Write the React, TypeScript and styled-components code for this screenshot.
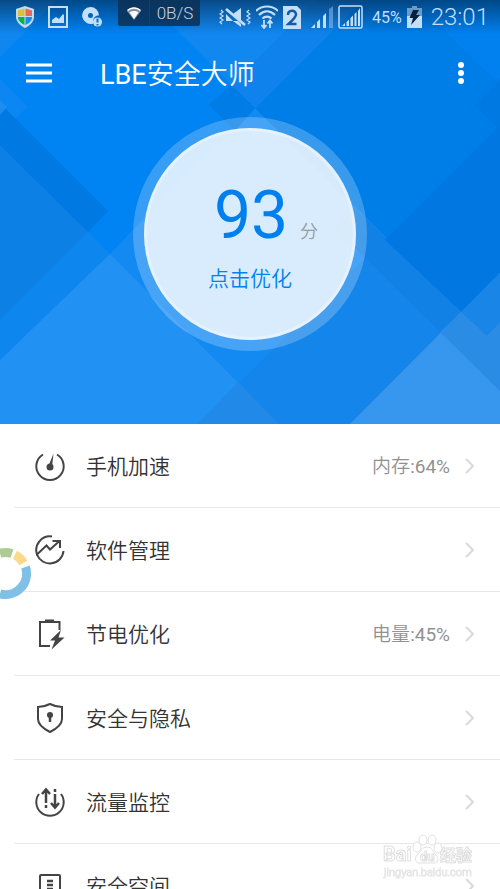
import React from "react";
import styled, { createGlobalStyle } from "styled-components";

const GlobalStyle = createGlobalStyle`
  * { box-sizing: border-box; }
  body {
    margin: 0;
    background: #fff;
    font-family: Roboto, "Noto Sans CJK SC", sans-serif;
    font-weight: 350;
  }
  button { font: inherit; border: 0; padding: 0; background: none; cursor: pointer; }
  svg { display: block; flex: none; }
`;

const Screen = styled.div`
  position: relative;
  display: flex;
  flex-direction: column;
  height: 100vh;
  overflow: hidden;
  background: #fff;
`;

const Hero = styled.header`
  position: relative;
  flex: none;
  display: flex;
  flex-direction: column;
  background: #0083f3;
  isolation: isolate;
`;

const Backdrop = styled.svg`
  position: absolute;
  inset: 0;
  width: 100%;
  height: 100%;
  z-index: -1;
`;

const StatusBar = styled.div`
  display: flex;
  justify-content: space-between;
  height: 34px;
  background: linear-gradient(rgba(0, 25, 50, 0.55), rgba(0, 40, 80, 0));
  color: #c4dffa;
`;

const StatusGroup = styled.div<{ $gap: number }>`
  display: flex;
  align-items: center;
  gap: ${(p) => p.$gap}px;
`;

const Notifications = styled(StatusGroup)`
  padding-left: 16px;
`;

const System = styled(StatusGroup)`
  padding-right: 11px;
`;

const SpeedBadge = styled.div`
  display: flex;
  align-self: flex-start;
  align-items: center;
  height: 26px;
  width: 82px;
  margin-left: 2px;
  border-radius: 0 0 2px 2px;
  background: rgba(12, 48, 86, 0.85);
  color: #c9d2da;
  font-size: 17px;
  font-weight: 300;
`;

const SpeedIcon = styled.span`
  display: flex;
  align-items: center;
  justify-content: center;
  width: 32px;
  height: 26px;
  border-right: 1px solid #173f69;
`;

const SpeedText = styled.span`
  flex: 1;
  text-align: center;
`;

const Battery = styled.span`
  font-size: 16px;
  font-weight: 400;
  margin-left: 4px;
`;

const Clock = styled.time`
  font-size: 24px;
  font-weight: 300;
  line-height: 34px;
  margin-left: 4px;
`;

const Toolbar = styled.div`
  display: flex;
  align-items: center;
  height: 78px;
  padding: 0 25px 0 26px;
`;

const IconButton = styled.button`
  display: flex;
  align-items: center;
  justify-content: center;
  height: 40px;
`;

const Latin = styled.span`
  font-weight: 400;
`;

const Title = styled.h1`
  flex: 1;
  margin: 0 0 0 48px;
  padding-top: 4px;
  color: #fff;
  font-size: 27px;
  line-height: 36px;
  font-weight: 350;
`;

const ScoreButton = styled.button`
  display: flex;
  flex-direction: column;
  align-items: center;
  align-self: center;
  width: 234px;
  height: 234px;
  margin: 5px 0 73px;
  padding-top: 56px;
  border: 11px solid rgba(255, 255, 255, 0.22);
  border-radius: 50%;
  background: rgba(255, 255, 255, 0.84);
  background-clip: padding-box;
  box-shadow: inset 0 0 1px 3px rgba(255, 255, 255, 0.35);
  color: #0080ee;
`;

const Points = styled.span`
  display: flex;
  align-items: baseline;
  gap: 12px;
  padding-left: 32px;
  font-size: 66px;
  font-weight: 400;
  line-height: 64px;
`;

const Unit = styled.span`
  color: #979da3;
  font-size: 18px;
  font-weight: 350;
`;

const Hint = styled.span`
  font-size: 21px;
  line-height: 30px;
`;

const Menu = styled.ul`
  flex: 1;
  min-height: 0;
  margin: 0;
  padding: 0;
  list-style: none;
  overflow-y: auto;
  scrollbar-width: none;
`;

const MenuItem = styled.li`
  margin-left: 14px;
  border-bottom: 1px solid #e8e8e8;
`;

const MenuButton = styled.button`
  display: flex;
  align-items: center;
  width: 100%;
  height: 83px;
  padding: 0 25px 0 20px;
  text-align: left;
`;

const Label = styled.span`
  flex: 1;
  margin-left: 20px;
  padding-top: 2px;
  color: #333;
  font-size: 21px;
  line-height: 30px;
`;

const Value = styled.span`
  margin-right: 14px;
  padding-top: 2px;
  color: #919191;
  font-size: 19px;
  line-height: 28px;
`;

const FloatingRing = styled.svg`
  position: fixed;
  left: 0;
  top: 547px;
`;

const Watermark = styled.svg`
  position: fixed;
  right: 25px;
  bottom: 8px;
  pointer-events: none;
`;

const Pattern = () => (
  <Backdrop viewBox="0 0 500 424" preserveAspectRatio="none" aria-hidden="true">
    <path d="M0 0H57L0 57z" fill="#0f87ef" />
    <path d="M0 79 28 107 0 132z" fill="#0b86f2" />
    <path d="M255 108 363 0H500V320L487 336z" fill="#007ee8" />
    <path d="M147 0 255 108 363 0z" fill="#1187f0" />
    <path d="M316 0 231 85 255 108 363 0z" fill="#0f83eb" />
    <path d="M413 0 500 85V0z" fill="#0081ef" />
    <path d="M209 105 230 86 275 131 235 131z" fill="#007ce6" />
    <path d="M255 108 0 360V424H500V350z" fill="#1389f2" />
    <path d="M147 108 255 108 147 215 110 254 88 232z" fill="#0083f3" />
    <path d="M209 105 231 85 255 108 235 131z" fill="#007ce6" />
    <path d="M0 320 88 232 110 254 0 360z" fill="#0d86ee" />
    <path d="M0 145 88 232 0 320z" fill="#0c80e5" />
    <path d="M0 103 108 211 88 232 0 145z" fill="#0079e3" />
    <path d="M0 100 7 107 0 115z" fill="#1c8cf0" />
    <path d="M110 254 279 424H0V360z" fill="#2291f4" />
    <path d="M198 424 365 258 500 391V424z" fill="#1485ea" />
    <path d="M198 424 238 382 279 424z" fill="#218ae9" />
    <path d="M355 208 487 336 500 349V391L365 258 335 228z" fill="#1181e6" />
    <path d="M255 108 487 336 500 323V125L480 90z" fill="#007ee8" />
    <path d="M500 79 474 105 497 128 500 125z" fill="#007ae3" />
    <path d="M500 125 385 240 487 336 500 323z" fill="#0077e1" />
    <path d="M350 424 500 273V424z" fill="#3796ee" />
    <path d="M440 332 461 312 487 336 500 323V391z" fill="#2b8ce6" />
    <path d="M461 312 500 273V323L487 336z" fill="#1985e6" />
  </Backdrop>
);

const ShieldStatus = () => (
  <svg width="18" height="22" viewBox="0 0 18 22">
    <path d="M9 0 18 3V11C18 16 13 20 9 22 5 20 0 16 0 11V3z" fill="#c5dcf0" />
    <path d="M8.500 2.500V10H2V4.500z" fill="#d9c32e" />
    <path d="M9.500 2.500V10H16V4.500z" fill="#e5685c" />
    <path d="M2 11H8.500V19C5 17 2 15 2 11z" fill="#10b044" />
    <path d="M16 11H9.500V19C13 17 16 15 16 11z" fill="#168bf0" />
  </svg>
);

const ImageStatus = () => (
  <svg width="20" height="22" viewBox="0 0 20 22">
    <path d="M1 1H19V21H1z" fill="none" stroke="currentColor" strokeWidth="2" />
    <path d="M4 17V14L8 11 11 13 15 8 16 9V17z" fill="currentColor" />
  </svg>
);

const DiscStatus = () => (
  <svg width="20" height="22" viewBox="0 0 20 22">
    <path fillRule="evenodd" d="M8.500 1A8.500 8.500 0 0 1 17 9.500C13 9 10 13 11.500 17.500A8.500 8.500 0 1 1 8.500 1zM8.500 7A2.500 2.500 0 1 0 8.500 12 2.500 2.500 0 0 0 8.500 7z" fill="currentColor" />
    <circle cx="15.500" cy="16" r="4.500" fill="currentColor" />
    <path d="M15.500 12.500V16.500M15.500 18V19.500" stroke="#0c6fc8" strokeWidth="2" />
  </svg>
);

const SpeedWifi = () => (
  <svg width="14" height="13" viewBox="0 0 14 13">
    <path d="M0 4C4 -1 10 -1 14 4L7 13z" fill="#8595a5" />
    <path d="M.5 3.500C4 0 10 0 13.500 3.500" fill="none" stroke="#fff" strokeWidth="1.500" />
    <path d="M2.500 5.500C5 3.500 9 3.500 11.500 5.500L7 12z" fill="#fff" />
  </svg>
);

const MuteVibrate = () => (
  <svg width="32" height="22" viewBox="0 0 32 22" fill="none" stroke="currentColor">
    <path d="M2 4 4 6 1 8 4 10 1 12 4 14 1 16 3 18M30 4 28 6 31 8 28 10 31 12 28 14 31 16 29 18" strokeWidth="1.200" />
    <path d="M7 8 14 15H7zM14 8 22 2V15z" fill="currentColor" stroke="none" />
    <path d="M7 3 26 19" strokeWidth="2.500" />
    <path d="M14 15 22 21V18L19 15z" fill="currentColor" stroke="none" />
  </svg>
);

const WifiStatus = () => (
  <svg width="22" height="24" viewBox="0 0 22 24" fill="none" stroke="currentColor" strokeWidth="2.200">
    <path d="M0 6C6 0 16 0 22 6M3 10C8 5 14 5 19 10M6.500 13.500C9 11 13 11 15.500 13.500" />
    <path d="M8 15V23M5.500 20 8 23 10.500 20M14 23V15M11.500 18.500 14 15.500 16.500 18.500" strokeWidth="1.800" />
  </svg>
);

const SimIcon = styled.svg`
  margin-right: 5px;
`;

const SimStatus = () => (
  <SimIcon width="18" height="23" viewBox="0 0 18 23">
    <path d="M0 0H14L18 4V23H0z" fill="currentColor" />
    <path d="M5 9C5 3.500 13 3.500 13 8.500 13 11 11 13 5.500 18H13.500" fill="none" stroke="#155b9e" strokeWidth="2.500" />
  </SimIcon>
);

const SignalStatus = () => (
  <svg width="22" height="22" viewBox="0 0 22 22" fill="currentColor">
    <path d="M0 22 4 18V22zM6 16 9 13V22H6zM12 10 15 7V22H12z" />
    <path d="M18 3 22 0V22H18z" opacity=".4" />
  </svg>
);

const BoxedSignal = () => (
  <svg width="25" height="24" viewBox="0 0 25 24" fill="currentColor">
    <rect x="1" y="1" width="23" height="22" rx="1.500" fill="none" stroke="currentColor" strokeWidth="1.500" />
    <path d="M4 21 7 18V21zM8.500 17 11 14.500V21H8.500zM12.500 13 15 10.500V21H12.500zM16.500 9 18.500 7V21H16.500zM20 6 22 3V21H20z" />
  </svg>
);

const BatteryStatus = () => (
  <svg width="15" height="22" viewBox="0 0 15 22">
    <path d="M5 0H10V2H15V10H0V2H5z" fill="#6b9bc8" />
    <path d="M0 10H15V22H0z" fill="currentColor" />
    <path d="M6 4H12L9 9H13L4 19 6 12H2.500z" fill="#06213d" />
  </svg>
);

type IconKind = "boost" | "apps" | "power" | "privacy" | "traffic" | "space";

const drawings: Record<IconKind, React.ReactNode> = {
  boost: (
    <>
      <path d="M9 4.500A13.700 13.700 0 1 0 23 4.500" />
      <circle cx="16" cy="17" r="3.500" fill="currentColor" stroke="none" />
      <path d="M14.500 16 19.500 3.500 18 17z" fill="currentColor" stroke="none" />
    </>
  ),
  apps: (
    <>
      <path d="M18 2.500A13.700 13.700 0 0 0 3 20.500L12.500 11.500 16 15.500 25.500 7M18.500 7H26V14" />
      <path d="M3 20.500A13.700 13.700 0 0 0 29.500 17" />
    </>
  ),
  power: (
    <>
      <path d="M16 28H6V4H25.500V12" />
      <path d="M11 4V1.500H20V4z" fill="currentColor" stroke="none" />
      <path d="M27 12 16 22.500H21L17.500 31.500 30.500 19.500H24.500z" fill="currentColor" stroke="none" />
    </>
  ),
  privacy: (
    <>
      <path d="M16 2C12 4 8 5 4 5V17C4 23 10 27 16 30 22 27 28 23 28 17V5C24 5 20 4 16 2z" />
      <circle cx="16" cy="13" r="3" fill="currentColor" stroke="none" />
      <path d="M16 14V20" strokeWidth="2.500" />
    </>
  ),
  traffic: (
    <>
      <path d="M5 8A13.700 13.700 0 1 0 27 8" />
      <path d="M12 17V4M8 8 12 3.500 16 8M21 8V21M17 17 21 21.500 25 17" strokeWidth="2.500" />
      <path d="M12 19V22M21 3V6" strokeWidth="2.500" />
    </>
  ),
  space: (
    <>
      <rect x="6" y="5" width="20" height="25" rx="1" />
      <path d="M13 11H19M13 15H19M13 19H19" strokeWidth="2.500" />
    </>
  ),
};

const MenuIcon = ({ kind }: { kind: IconKind }) => (
  <svg width="32" height="32" viewBox="0 0 32 32" fill="none" stroke="currentColor" strokeWidth="2" color="#444">
    {drawings[kind]}
  </svg>
);

const Chevron = () => (
  <svg width="11" height="16" viewBox="0 0 11 16" fill="none" stroke="#d9d9d9" strokeWidth="2">
    <path d="M2 1 9 8 2 15" />
  </svg>
);

const items: { kind: IconKind; label: string; value?: [string, number] }[] = [
  { kind: "boost", label: "手机加速", value: ["内存", 64] },
  { kind: "apps", label: "软件管理" },
  { kind: "power", label: "节电优化", value: ["电量", 45] },
  { kind: "privacy", label: "安全与隐私" },
  { kind: "traffic", label: "流量监控" },
  { kind: "space", label: "安全空间" },
];

export default function App() {
  return (
    <Screen>
      <GlobalStyle />
      <Hero>
        <Pattern />
        <StatusBar>
          <Notifications $gap={14}>
            <ShieldStatus />
            <ImageStatus />
            <DiscStatus />
            <SpeedBadge>
              <SpeedIcon>
                <SpeedWifi />
              </SpeedIcon>
              <SpeedText>0B/S</SpeedText>
            </SpeedBadge>
          </Notifications>
          <System $gap={5}>
            <MuteVibrate />
            <WifiStatus />
            <SimStatus />
            <SignalStatus />
            <BoxedSignal />
            <Battery>45%</Battery>
            <BatteryStatus />
            <Clock>23:01</Clock>
          </System>
        </StatusBar>
        <Toolbar>
          <IconButton aria-label="菜单">
            <svg width="26" height="20" viewBox="0 0 26 20" stroke="#fff" strokeWidth="3">
              <path d="M0 2H26M0 10H26M0 18H26" />
            </svg>
          </IconButton>
          <Title>
            <Latin>LBE</Latin>安全大师
          </Title>
          <IconButton aria-label="更多">
            <svg width="28" height="24" viewBox="0 0 28 24" fill="#fff">
              <circle cx="14" cy="4" r="3" />
              <circle cx="14" cy="12" r="3" />
              <circle cx="14" cy="20" r="3" />
            </svg>
          </IconButton>
        </Toolbar>
        <ScoreButton>
          <Points>
            93<Unit>分</Unit>
          </Points>
          <Hint>点击优化</Hint>
        </ScoreButton>
      </Hero>
      <Menu>
        {items.map((item) => (
          <MenuItem key={item.kind}>
            <MenuButton>
              <MenuIcon kind={item.kind} />
              <Label>{item.label}</Label>
              {item.value && (
                <Value>
                  {item.value[0]}
                  <Latin>{`:${item.value[1]}%`}</Latin>
                </Value>
              )}
              <Chevron />
            </MenuButton>
          </MenuItem>
        ))}
      </Menu>
      <FloatingRing width="32" height="54" viewBox="0 0 32 54" fill="none" strokeWidth="9" aria-hidden="true">
        <circle cx="5.500" cy="26.500" r="21" fill="#fff" stroke="#fff" strokeWidth="10" />
        <path d="M0 6.200A21 21 0 0 1 12 6.600" stroke="#aecb94" />
        <path d="M15 7.800A21 21 0 0 1 23.500 16" stroke="#fbd98a" />
        <path d="M25.500 20A21 21 0 0 1 0 46.800" stroke="#7fc1e6" />
      </FloatingRing>
      <Watermark width="92" height="52" viewBox="0 0 92 52" fill="#fff" stroke="#e0e0e0" strokeWidth="1" fontFamily="Roboto, 'Noto Sans CJK SC', sans-serif">
        <text x="0" y="32" fontSize="20" fontWeight="700">Bai</text>
        <ellipse cx="34" cy="18" rx="4" ry="5" />
        <ellipse cx="40" cy="11" rx="4" ry="5" />
        <ellipse cx="49" cy="11" rx="4" ry="5" />
        <ellipse cx="55" cy="19" rx="4" ry="5" />
        <path d="M44 18C38 18 38 24 34 26 30 31 34 35 39 34H49C55 35 57 30 53 26 50 24 50 18 44 18z" />
        <text x="37" y="32" fontSize="13" fontWeight="700">du</text>
        <text x="57" y="32" fontSize="16" fontWeight="700">经验</text>
        <text x="1" y="47" fontSize="11" stroke="#e6e6e6">jingyan.baidu.com</text>
      </Watermark>
    </Screen>
  );
}
